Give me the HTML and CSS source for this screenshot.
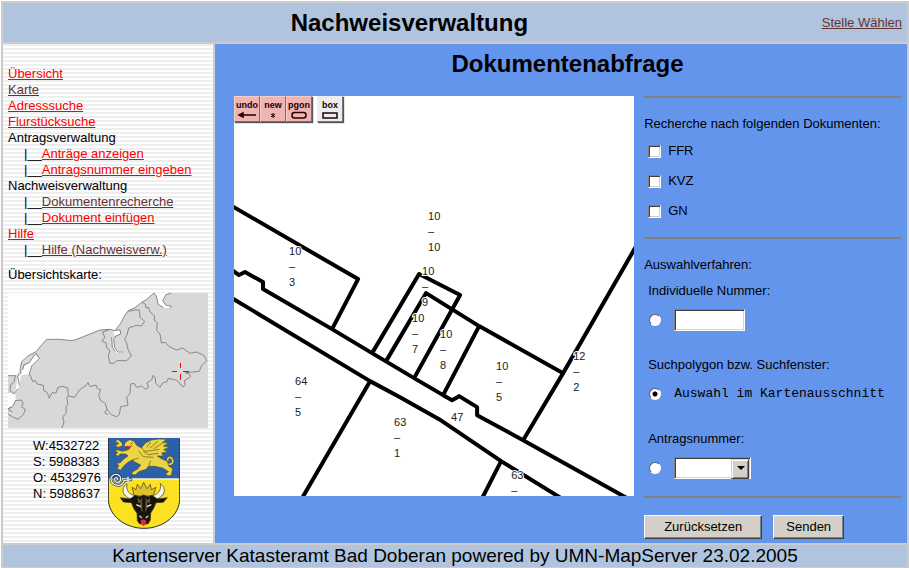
FILE: index.html
```html
<!DOCTYPE html>
<html lang="de">
<head>
<meta charset="utf-8">
<title>Nachweisverwaltung</title>
<link rel="stylesheet" href="styles.css">
</head>
<body>
<div class="frame">
  <header class="topbar">
    <h1 class="title">Nachweisverwaltung</h1>
    <a class="visited" href="#">Stelle Wählen</a>
  </header>

  <aside class="sidebar">
    <nav>
      <ul class="menu">
        <li><a href="#">Übersicht</a></li>
        <li><a class="visited" href="#">Karte</a></li>
        <li><a href="#">Adresssuche</a></li>
        <li><a href="#">Flurstücksuche</a></li>
        <li>Antragsverwaltung</li>
        <li class="sub">|__<a href="#">Anträge anzeigen</a></li>
        <li class="sub">|__<a href="#">Antragsnummer eingeben</a></li>
        <li>Nachweisverwaltung</li>
        <li class="sub">|__<a class="visited" href="#">Dokumentenrecherche</a></li>
        <li class="sub">|__<a href="#">Dokument einfügen</a></li>
        <li><a href="#">Hilfe</a></li>
        <li class="sub">|__<a class="visited" href="#">Hilfe (Nachweisverw.)</a></li>
      </ul>
    </nav>
    <p class="caption">Übersichtskarte:</p>
    <svg class="overview" viewBox="24 99 600 405">
      <rect class="land" x="24" y="99" width="600" height="405"/>
      <g class="sea">
        <path d="M24 99H462L440 118 425 127 405 143 385 152 375 165 362 190 345 212 330 208 300 210 270 222 230 238 215 242 180 238 140 238 125 255 108 275 85 287 65 305 60 330 50 345 24 347Z"/>
        <path d="M104 284 88 308 72 318 64 338 53 348 50 372 45 400H24V446L38 440 47 420 46 402 56 384 63 346 88 342 95 318 118 295Z"/>
        <path d="M462 99 469 108 474 132 490 143 510 144 514 138 498 136 488 122 498 104 515 99Z"/>
        <path d="M341 210 358 209 361 220 348 228 341 224Z"/>
      </g>
      <path class="river" d="M338 232 340 260 352 276 370 276"/>
      <g class="border">
        <path d="M462 99 440 118 425 127 405 143 385 152 375 165 362 190 345 212 330 208 300 210 270 222 230 238 215 242 180 238 140 238 125 255 108 275 85 287 65 305 60 330 64 338"/>
        <path d="M104 284 88 308 72 314 68 330M104 284 110 281 118 295 95 318 88 342 92 348 98 365 106 362 112 372 130 376 132 392 142 398 148 415 156 398 168 399 174 382 188 379 203 384 205 408 224 412 238 390 258 376 264 368 270 380 288 375 292 386 302 389 296 405 302 422 316 430 321 448 335 465 350 470 358 464 362 440 384 436 380 412 390 400 392 372 402 370 410 382 425 378 437 388 445 382 441 368 455 360 459 346 466 354 467 370 480 382 488 369 502 364 504 356 520 358 532 362 540 372 550 381 555 374 553 362 572 350 568 342 556 338 580 336 598 334 604 318 620 302 612 286 590 276 570 280 548 264 530 270 508 260 496 247 484 249 480 222 470 212 472 188 462 180 464 168 450 156 446 142 438 144 436 132 425 127"/>
        <path d="M205 408 200 412 204 432 198 440 199 460 188 470 192 486 186 504M321 448 314 458 324 464M330 208 308 216 314 232 306 244 318 248 320 264 330 272 325 288 330 310 342 310 350 302 380 302 394 288 384 268 380 250 374 238 382 222 386 204 408 196 424 198 434 184 420 172 418 150 405 150 385 154"/>
        <path d="M24 347 46 347 42 366 32 374 30 392 42 402 54 386M64 338 53 348 58 376M24 446 38 440 46 422 64 420 70 432 64 440 76 448 70 464 54 478 40 472 24 462M32 440 26 450 38 456M462 99 469 108 474 132 490 143M515 99 498 104 488 122 498 136 514 138 510 144M345 212 360 209 362 222 348 228 341 236 344 262 354 276 370 276M335 232 337 262 346 274"/>
      </g>
      <path class="cross" d="M541.500 309V325M541.500 343V360M516 334.500H532M550 334.500H567"/>
    </svg>
    <div class="extent">
      <ul class="coords">
        <li>W:4532722</li>
        <li>S: 5988383</li>
        <li>O: 4532976</li>
        <li>N: 5988637</li>
      </ul>
      <svg class="arms" viewBox="24 18 216 273">
        <defs>
          <clipPath id="shield"><path d="M24 18H239V200C239 250 190 289 132 289C74 289 24 250 24 200Z"/></clipPath>
        </defs>
        <g clip-path="url(#shield)">
          <rect x="24" y="18" width="216" height="124" fill="#2c60a8"/>
          <rect x="24" y="142" width="216" height="150" fill="#fbe122"/>
          <path d="M24 141H240" stroke="#f5f3d8" stroke-width="4"/>
        </g>
        <g stroke="#5b511b" stroke-width="2" fill="#ecd447" stroke-linejoin="round">
          <path d="M192 92C210 102 223 94 217 82C213 72 200 78 204 86" fill="none" stroke="#5b511b" stroke-width="9"/>
          <path d="M188 90C210 104 223 94 217 82C213 72 200 76 204 86" fill="none" stroke="#ecd447" stroke-width="5"/>
          <path d="M76 31 88 23 102 27 110 40 124 48 136 33 154 24 176 21 200 22 188 31 205 33 190 42 207 46 191 53 203 60 185 63 190 72 172 72 184 80 202 88 206 102 218 110 214 130 202 132 198 124 206 119 188 108 164 103 145 103 138 112 116 119 106 129 94 126 98 119 112 112 122 99 110 93 96 84 84 91 72 101 61 115 51 109 57 101 50 94 61 92 70 82 84 72 78 66 60 66 55 73 46 68 53 62 44 54 56 54 66 58 82 54 90 49 80 47 72 42Z"/>
          <path d="M124 48 136 58 152 56 178 52M130 58 146 68 174 64M116 56 130 74 160 76M96 84 116 78M152 30 140 46M174 27 150 48M190 31 162 50M146 103 152 86M98 30 92 38" fill="none"/>
          <path d="M66 33 54 22 45 28 56 34 45 42 56 46 66 42"/>
        </g>
        <path d="M78 42 90 43 98 38 88 51 76 49Z" fill="#b52540"/>
        <g fill="none" stroke-linecap="round">
          <path d="M93 143 72 146C67 168 34 162 33 142C32 123 62 122 62 141C62 154 43 154 44 142C45 135 54 136 53 142" stroke="#20355f" stroke-width="8"/>
          <path d="M93 143 72 146C67 168 34 162 33 142C32 123 62 122 62 141C62 154 43 154 44 142C45 135 54 136 53 142" stroke="#e9edf2" stroke-width="4"/>
          <path d="M84 136V150" stroke="#e9edf2" stroke-width="4"/>
        </g>
        <g stroke="#39331b" stroke-width="2" stroke-linejoin="round">
          <path d="M81 155C62 168 65 192 93 201L106 190C90 190 77 176 81 155ZM181 155C200 168 197 192 169 201L156 190C172 190 185 176 181 155Z" fill="#f7f4ec"/>
          <path d="M102 190 96 166 108 173 112 157 122 170 131 151 141 170 151 157 154 173 168 166 160 190Q131 198 102 190Z" fill="#e1bf2e"/>
          <path d="M106 190 90 201 61 197 70 210 94 212 102 231 111 244 112 266 119 276H144L151 264 152 243 161 229 168 212 190 211 202 197 172 201 156 190 145 194 131 189 118 194Z" fill="#17130f"/>
        </g>
        <path d="M114 199 123 208 115 212ZM149 199 140 208 148 212ZM126 196 121 223 127 239M137 196 142 223 136 239" fill="#6a5c32" stroke="#766740" stroke-width="2"/>
        <path d="M109 218 122 224M154 218 141 224" stroke="#eee5c8" stroke-width="4"/>
        <path d="M118 251 126 258M145 251 137 258" stroke="#d8ceb2" stroke-width="4"/>
        <path d="M122 265 131 262 139 266 137 278 130 282 123 276Z" fill="#ea2530"/>
        <path d="M25 19V200C25 250 74 289 132 289C190 289 239 250 239 200V19" fill="none" stroke="#27312b" stroke-width="3"/>
      </svg>
    </div>
  </aside>

  <main class="content">
    <h2 class="title heading">Dokumentenabfrage</h2>
    <div class="columns">
      <div class="map">
        <svg class="plan" viewBox="0 0 400 400">
          <g class="parcels">
            <path d="M-2 110 124 183 98 233"/>
            <path d="M-2 174 5 179 11 176 29 186V193L98 233 138 257 180 282 209 299 218 304 225 300 243 311V319L289 344 393 402"/>
            <path d="M-2 202 136 285 166 301 205 323 267 365 327 402"/>
            <path d="M136 285 68 402M267 365 248 402"/>
            <path d="M138 257 185 178 226 199 180 282"/>
            <path d="M152 265 192 197 245 230 329 277M245 230 209 299"/>
            <path d="M289 344 329 277 402 150"/>
          </g>
          <g class="numbers">
            <text x="194" y="124">10<tspan x="194" dy="15">–</tspan><tspan x="194" dy="16">10</tspan></text>
            <text x="55" y="159">10<tspan x="55" dy="15">–</tspan><tspan x="55" dy="16">3</tspan></text>
            <text x="188" y="179">10<tspan x="188" dy="15">–</tspan><tspan x="188" dy="16">9</tspan></text>
            <text x="178" y="226">10<tspan x="178" dy="15">–</tspan><tspan x="178" dy="16">7</tspan></text>
            <text x="206" y="242">10<tspan x="206" dy="15">–</tspan><tspan x="206" dy="16">8</tspan></text>
            <text x="262" y="274">10<tspan x="262" dy="15">–</tspan><tspan x="262" dy="16">5</tspan></text>
            <text x="339" y="264">12<tspan x="339" dy="15">–</tspan><tspan x="339" dy="16">2</tspan></text>
            <text x="217" y="325">47</text>
            <text x="61" y="289">64<tspan x="61" dy="15">–</tspan><tspan x="61" dy="16">5</tspan></text>
            <text x="160" y="330">63<tspan x="160" dy="15">–</tspan><tspan x="160" dy="16">1</tspan></text>
            <text x="277" y="383">63<tspan x="277" dy="15">–</tspan></text>
          </g>
        </svg>
        <div class="tools">
          <button class="tool active" type="button">undo
            <svg viewBox="0 0 20 10"><path d="M2 5H19M6 3 2 5 6 7Z"/></svg>
          </button>
          <button class="tool active" type="button">new
            <svg viewBox="0 0 20 10"><path class="thin" d="M10 3V8M8 4 12 7M12 4 8 7"/></svg>
          </button>
          <button class="tool active" type="button">pgon
            <svg viewBox="0 0 20 10"><rect x="3" y="2.500" width="14" height="5.500" rx="2.500"/></svg>
          </button>
          <button class="tool box" type="button">box
            <svg viewBox="0 0 20 10"><path d="M3 3H17V8H3Z"/></svg>
          </button>
        </div>
      </div>

      <form class="query">
        <hr>
        <p class="lead">Recherche nach folgenden Dokumenten:</p>
        <div class="checks">
          <label><input type="checkbox">FFR</label>
          <label><input type="checkbox">KVZ</label>
          <label><input type="checkbox">GN</label>
        </div>
        <hr>
        <p class="lead">Auswahlverfahren:</p>
        <div class="choice">
          <label for="by-number">Individuelle Nummer:</label>
          <div class="row">
            <input type="radio" name="mode" id="by-number">
            <input type="text" class="number" aria-label="Individuelle Nummer">
          </div>
        </div>
        <div class="choice">
          <label for="by-map">Suchpolygon bzw. Suchfenster:</label>
          <div class="row">
            <input type="radio" name="mode" id="by-map" checked>
            <label class="mono" for="by-map">Auswahl im Kartenausschnitt</label>
          </div>
        </div>
        <div class="choice">
          <label for="by-request">Antragsnummer:</label>
          <div class="row">
            <input type="radio" name="mode" id="by-request">
            <span class="dropdown"><select aria-label="Antragsnummer"><option></option></select></span>
          </div>
        </div>
        <hr>
        <div class="actions">
          <button class="push wide" type="reset">Zurücksetzen</button>
          <button class="push" type="submit">Senden</button>
        </div>
      </form>
    </div>
  </main>

  <footer class="footer">Kartenserver Katasteramt Bad Doberan powered by UMN-MapServer 23.02.2005</footer>
</div>
</body>
</html>
```
FILE: styles.css
```css
* { box-sizing: border-box; }

body {
  margin: 0;
  background: #fff;
  color: #000;
  font: 13px/16px "Liberation Sans", Arial, sans-serif;
}

h1, h2, p, ul { margin: 0; padding: 0; }
ul { list-style: none; }
svg { display: block; }
a { color: #f00; }
a.visited { color: #633; }

.frame {
  display: grid;
  grid-template: 39px 1fr 22px / 210px 1fr;
  gap: 2px;
  min-height: calc(100vh - 1px);
  margin: 1px 0 0 1px;
  padding: 2px 2px 1px;
  background: #ccc;
}

.topbar, .footer {
  grid-column: 1 / -1;
  background: #b0c4de;
}
.topbar {
  display: flex;
  align-items: center;
  gap: 6px;
  padding-right: 5px;
}
.title {
  flex: 1;
  font-size: 24px;
  line-height: 28px;
  text-align: center;
}
.footer {
  font-size: 19px;
  line-height: 22px;
  text-align: center;
}

.sidebar {
  padding: 22px 5px 0;
  background: repeating-linear-gradient(#eee 0 2px, #fff 2px 4px);
}
.sub { padding-left: 16px; }
.caption { margin: 9px 0 10px; }
.overview { width: 100%; }
.land { fill: #d8d8d8; }
.sea { fill: #fff; }
.river { fill: none; stroke: #fff; stroke-width: 5; }
.border { fill: none; stroke: #888; stroke-width: 3; }
.cross { stroke: #f00; stroke-width: 3; shape-rendering: crispEdges; }
.extent {
  display: flex;
  gap: 8px;
  margin-top: 10px;
  padding-left: 25px;
}
.coords { width: 67px; white-space: nowrap; }
.arms { width: 72px; }

.content {
  padding: 6px 6px 0 19px;
  background: #6495ed;
}
.heading { margin-bottom: 18px; }
.columns {
  display: flex;
  gap: 10px;
  align-items: flex-start;
}

.map {
  position: relative;
  flex: 0 0 60%;
  background: #fff;
}
.plan { width: 100%; }
.parcels { fill: none; stroke: #000; stroke-width: 4; stroke-linejoin: round; }
.numbers {
  fill: #222;
  stroke: #fff;
  stroke-width: 2;
  paint-order: stroke;
  font-size: 11px;
}
.tools {
  position: absolute;
  top: 0;
  left: 0;
  display: flex;
}
.tool {
  width: 26px;
  height: 26px;
  padding: 1px 0 0;
  border: 1px solid;
  border-color: #f3cccc #866 #866 #f3cccc;
  background: #f0b4b4;
  box-shadow: 1px 1px 1px #555;
  color: #200;
  font: bold 9px/10px "Liberation Sans", Arial, sans-serif;
}
.tool svg { width: 20px; height: 10px; margin: 0 auto; fill: none; stroke: currentColor; stroke-width: 1.5; }
.tool .thin { stroke-width: 1; }
.tool.box {
  margin-left: 5px;
  border-color: #eee #777 #777 #eee;
  background: #ececec;
}

.query { flex: 1; }
hr {
  height: 2px;
  margin: 0;
  border: 0;
  background: #808080;
}
.lead { margin-top: 18px; }
.checks { margin: 4px 4px 11px; }
.checks label {
  display: flex;
  align-items: center;
  gap: 7px;
  height: 30px;
}
.choice { margin: 10px 4px 26px; }
.choice:nth-last-of-type(2) { margin-bottom: 17px; }
.row {
  display: flex;
  align-items: center;
  height: 22px;
  margin-top: 10px;
}
input, select { margin: 0; appearance: none; background: #fff; font: inherit; }
[type="checkbox"], [type="text"], select {
  border: 1px solid;
  border-color: #808080 #fff #fff #808080;
  border-radius: 0;
  box-shadow: inset 1px 1px #404040, inset -1px -1px #d4d0c8;
}
[type="checkbox"] { width: 13px; height: 13px; }
[type="radio"] {
  width: 12px;
  height: 12px;
  margin: 0 13px 0 1px;
  border: 1px solid;
  border-color: #606060 #fff #fff #606060;
  border-radius: 50%;
}
[type="radio"]:checked { background: radial-gradient(#000 0 2px, #fff 3px); }
.number { width: 71px; height: 22px; }
.dropdown { position: relative; }
select { display: block; width: 77px; height: 22px; }
.dropdown::before, .dropdown::after {
  position: absolute;
  content: "";
  pointer-events: none;
}
.dropdown::before {
  top: 2px;
  right: 2px;
  width: 16px;
  height: 18px;
  border: 1px solid;
  border-color: #d4d0c8 #404040 #404040 #d4d0c8;
  background: #d4d0c8;
  box-shadow: inset 1px 1px #fff, inset -1px -1px #808080;
}
.dropdown::after {
  top: 9px;
  right: 6px;
  border: 4px solid transparent;
  border-top-color: #000;
  border-bottom: 0;
}
.mono { font-family: "Liberation Mono", "Courier New", monospace; }

.actions { display: flex; gap: 11px; margin-top: 17px; }
.push {
  width: 71px;
  height: 24px;
  padding: 0;
  border: 1px solid;
  border-color: #fff #404040 #404040 #fff;
  background: #d4d0c8;
  box-shadow: inset -1px -1px #808080;
  color: #000;
  font: inherit;
}
.push.wide { width: 118px; }
```
